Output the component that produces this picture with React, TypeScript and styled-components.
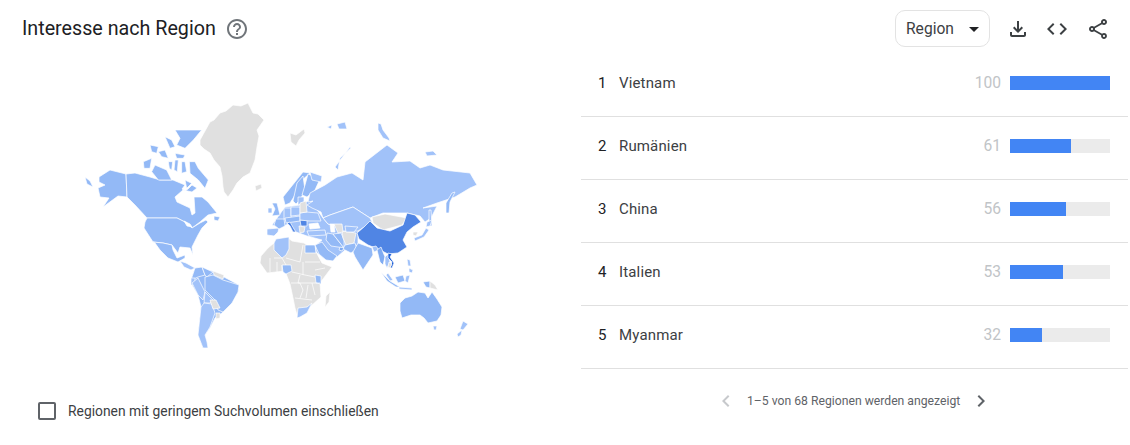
import React from "react";
import styled, { createGlobalStyle } from "styled-components";
import {
  MdHelpOutline,
  MdOutlineFileDownload,
  MdCode,
  MdOutlineShare,
  MdChevronLeft,
  MdChevronRight,
  MdArrowDropDown,
} from "react-icons/md";

const Global = createGlobalStyle`
  html, body { margin: 0; padding: 0; background: #fff; }
  body { font-family: Roboto, "Liberation Sans", sans-serif; color: #202124; overflow: hidden; }
`;

const Page = styled.div`
  width: 1130px;
  height: 445px;
  display: flex;
  flex-direction: column;
`;
const Header = styled.header`
  height: 54px;
  flex: none;
  display: flex;
  align-items: center;
  justify-content: space-between;
  padding: 3px 20px 0 22px;
  box-sizing: border-box;
`;
const TitleGroup = styled.div`
  display: flex;
  align-items: center;
  gap: 9px;
`;
const Title = styled.h2`
  margin: 0;
  font-size: 19.7px;
  font-weight: 400;
  color: #202124;
`;
const HelpIcon = styled(MdHelpOutline)`
  width: 24px;
  height: 24px;
  color: #70757a;
  display: block;
`;
const Actions = styled.div`
  display: flex;
  align-items: center;
`;
const Select = styled.div`
  width: 95px;
  height: 37px;
  box-sizing: border-box;
  border: 1px solid #e3e3e3;
  border-radius: 10px;
  display: flex;
  align-items: center;
  justify-content: space-between;
  padding: 0 3px 0 10px;
  font-size: 15.6px;
  color: #3c4043;
  margin-right: 16px;
`;
const CaretIcon = styled(MdArrowDropDown)`
  width: 24px;
  height: 24px;
  color: #202124;
`;
const IconButton = styled.button<{ $gap: number }>`
  width: 24px;
  height: 24px;
  margin-right: ${(p) => p.$gap}px;
  border: 0;
  padding: 0;
  background: none;
  color: #3c4043;
  display: flex;
  align-items: center;
  justify-content: center;
  svg { width: 24px; height: 24px; display: block; }
`;
const Body = styled.div`
  display: grid;
  grid-template-columns: 581px 549px;
  flex: 1;
`;
const LeftColumn = styled.div`
  display: flex;
  flex-direction: column;
`;
const MapSvg = styled.svg`
  display: block;
  width: 410px;
  height: 260px;
  margin: 46px 0 0 80px;
  filter: blur(0.35px);
`;
const CheckRow = styled.label`
  display: flex;
  align-items: center;
  gap: 12px;
  margin: 42px 0 0 38px;
  font-size: 13.87px;
  color: #3c4043;
`;
const CheckBox = styled.span`
  width: 18px;
  height: 18px;
  box-sizing: border-box;
  border: 2px solid #5f6368;
  border-radius: 2px;
  display: block;
`;
const RightColumn = styled.div`
  display: flex;
  flex-direction: column;
`;
const Row = styled.div`
  height: 63px;
  width: 547px;
  box-sizing: border-box;
  border-bottom: 1px solid #e0e0e0;
  display: flex;
  align-items: center;
  padding: 0 18px 5px 0;
  font-size: 15px;
  color: #3c4043;
`;
const Rank = styled.span`
  width: 38px;
  padding-left: 17px;
  box-sizing: border-box;
  flex: none;
  color: #202124;
`;
const Name = styled.span`
  flex: 1;
  letter-spacing: 0.15px;
`;
const Score = styled.span`
  color: #c1c4c7;
  font-size: 15.6px;
  width: 40px;
  text-align: right;
  margin-right: 9px;
`;
const Track = styled.div`
  width: 100px;
  height: 14px;
  background: #ebebeb;
`;
const Fill = styled.div`
  height: 100%;
  background: #4285f4;
`;
const Pager = styled.div`
  display: flex;
  align-items: center;
  margin: 20px 0 0 133px;
  font-size: 12.2px;
  color: #5f6368;
  gap: 9px;
`;
const PagerIcon = styled.span<{ $muted?: boolean }>`
  color: ${(p) => (p.$muted ? "#c7c9cc" : "#5f6368")};
  display: flex;
  svg { width: 24px; height: 24px; display: block; }
`;
const PagerText = styled.span`
  width: 213px;
  white-space: nowrap;
`;

const L = "#a1c2f9"; // light
const M = "#93b9f6"; // mid
const S = "#7fabf2";
const G = "#e0e0e0";
const C = "#5085e4";
const D = "#1c5fd8";
const W = "#ffffff";

// Arctic islands traced from a 3x crop whose origin is (130,130).
const arctic = (pts: string) =>
  pts
    .split(" ")
    .map((p) => {
      const [x, y] = p.split(",").map(Number);
      return `${130 + x / 3},${130 + y / 3}`;
    })
    .join(" ");

const regions: [string, string][] = [
  // Base land masses that close the gaps between countries
  [M, "195,268 213,271 224,277 239,285 238,292 230,305 222,313 215,318 210,328 205,335 208,348 203,348 198,335 201,307 198,295 192,285 191,279"],
  [L, "277,218 285,207 300,205 310,200 323,218 328,224 345,226 358,230 358,245 345,250 337,257 326,260 316,252 316,245 322,240 307,236 296,232 288,224 280,228 272,225"],
  // Greenland & grey north
  [G, "200,140 205,131 210,122 214,120 220,113 226,111 233,105 241,106 248,103 253,113 258,114 264,120 257,130 259,136 257,147 255,160 250,173 243,177 237,183 233,190 228,197 224,192 223,187 222,176 220,167 214,160 210,153 204,149 200,145"],
  [G, "255,186 261,184 262,188 256,191"],
  [G, "290,133 296,135 304,129 305,133 299,140 296,146 291,142"],
  // Alaska and Aleutians
  [M, "99,177 110,170 126,174 127,197 118,196 103,207 109,198 100,197 98,188 105,185 99,182"],
  [M, "85,177 90,181 93,187 87,184"],
  // Canada mainland
  [M, "126,174 135,173 150,177 160,180 173,180 185,185 182,189 185,191 188,189 192,185 197,188 192,192 183,190 175,197 177,202 190,208 192,215 195,213 194,197 202,197 208,202 217,213 208,215 200,222 192,228 187,223 177,218 147,218 135,205 127,197"],
  // Arctic archipelago
  [M, arctic("135,0 215,0 190,30 165,55 140,45 150,25")],
  [M, arctic("40,95 65,85 60,115 42,115")],
  [M, arctic("65,125 75,105 110,120 125,150 85,150")],
  [M, arctic("60,45 85,50 80,70 65,65")],
  [M, arctic("85,65 105,60 115,85 95,80")],
  [M, arctic("105,20 125,30 135,50 120,55")],
  [M, arctic("135,70 165,75 160,85 140,85")],
  [M, arctic("135,90 145,90 142,125 132,120")],
  [M, arctic("155,95 165,95 170,125 155,130")],
  [M, arctic("115,95 128,95 125,120 118,115")],
  [M, arctic("178,95 195,95 205,115 235,150 225,175 205,150 180,130")],
  [M, arctic("165,150 185,160 170,175")],
  [M, "214,216 220,217 218,221 214,220"],
  // USA
  [M, "147,218 177,218 187,223 192,228 200,223 206,220 208,222 202,228 198,235 192,247 193,255 190,248 180,247 178,253 172,245 163,243 153,242 144,228 145,222"],
  [W, "184,221 190,224 192,227 187,226"],
  // Mexico & Central America
  [M, "153,242 163,243 172,245 173,250 177,258 185,255 185,258 178,262 168,258 160,250 155,243"],
  [L, "180,261 186,263 195,268 191,270 184,267"],
  // South America
  [M, "195,268 202,267 205,275 198,277 191,280"],
  [M, "202,267 213,272 207,277 205,275"],
  [L, "191,278 195,278 195,285 191,285"],
  [L, "192,283 198,278 205,292 203,300 198,295"],
  [M, "205,277 213,275 223,280 239,285 238,292 232,303 223,312 218,310 215,300 205,290"],
  [L, "205,292 213,300 210,303 204,303"],
  [L, "204,303 212,304 215,313 210,327 205,335 207,342 208,348 203,348 198,335 201,307"],
  [G, "213,271 224,275 223,279 214,275"],
  [G, "210,300 216,300 220,308 213,309"],
  [G, "216,313 220,313 220,318 216,319"],
  // Africa
  [G, "260,263 261,256 268,248 274,243 287,237 292,241 304,243 315,250 322,263 332,267 326,275 320,283 321,297 311,306 305,312 298,318 295,308 293,298 290,284 285,271 276,272 267,273"],
  [L, "274,243 276,239 289,237 289,249 286,255 282,258 274,250"],
  [M, "305,245 315,245 316,253 305,253"],
  [M, "282,265 291,265 292,271 286,274 283,272"],
  [M, "315,275 321,276 321,284 316,283"],
  [L, "297,318 298,308 307,307 312,303 307,313 300,317"],
  [G, "326,296 330,292 329,302 325,307"],
  // Arabia / Middle east
  [M, "315,245 322,242 328,250 337,256 333,261 326,260 319,254"],
  [M, "327,233 333,234 344,248 338,247 331,246 326,240"],
  [M, "333,234 341,233 344,240 344,248"],
  [G, "342,231 356,233 354,243 346,245 343,238"],
  [M, "345,245 355,243 357,249 351,253 343,249"],
  [L, "307,231 325,230 326,235 309,236"],
  [S, "340,247 344,248 342,251 339,250"],
  // Europe
  [L, "267,229 279,228 278,232 274,236 267,235"],
  [M, "276,219 284,219 285,226 279,229 274,225"],
  [M, "272,203 277,203 280,215 272,216 275,209"],
  [L, "268,208 272,208 272,213 268,213"],
  [L, "284,208 291,208 291,218 284,219"],
  [L, "291,207 300,207 300,215 291,216"],
  [M, "285,218 300,216 300,221 286,223"],
  [C, "287,223 290,222 294,229 296,232 293,232 290,226"],
  [C, "300,220 307,220 307,226 301,226"],
  [L, "300,213 306,212 318,213 321,221 309,221 300,220"],
  [G, "299,226 305,227 304,232 300,233"],
  [M, "283,197 303,172 310,173 300,182 295,195 290,203 285,205"],
  [M, "297,183 303,176 305,190 300,200 296,204 293,201"],
  [M, "308,174 320,179 315,190 307,197 302,195 305,185"],
  [L, "310,172 322,176 321,182 312,180"],
  [L, "298,197 304,197 304,203 298,205"],
  [G, "300,203 306,201 307,212 300,213"],
  // Russia
  [L, "310,193 325,185 337,177 352,173 363,180 365,162 387,145 398,153 392,162 410,161 420,168 430,165 443,170 470,173 477,185 470,188 455,197 437,203 423,208 437,206 431,218 425,222 420,216 407,213 383,213 370,218 353,207 330,215 323,218 321,212 312,208 307,205 313,201 308,202"],
  [L, "335,167 350,147 351,148 340,158 338,170"],
  [L, "378,123 381,124 383,130 389,138 390,141 383,138 378,130"],
  [L, "327,127 332,125 331,129"],
  [L, "337,124 345,122 347,129 339,129"],
  [L, "425,152 433,151 437,155 427,156"],
  [M, "446,213 446,203 452,193 455,192 450,202 449,213"],
  [L, "429,210 431,210 432,226 429,226"],
  // Central Asia
  [L, "323,218 330,215 353,207 370,218 372,222 358,231 342,231 337,226 328,224"],
  [G, "334,224 342,224 343,232 338,233"],
  [L, "345,226 358,227 354,232 346,232"],
  // Mongolia
  [G, "372,217 385,214 407,218 402,225 383,230 373,223"],
  // China
  [C, "357,233 364,227 370,221 377,228 390,231 403,225 407,213 415,215 421,222 413,227 407,232 403,240 407,247 398,253 388,254 378,249 368,245 359,239"],
  [G, "413,232 418,232 416,236 413,235"],
  // India region
  [M, "353,252 358,243 372,248 373,255 363,270 355,257"],
  [L, "372,247 376,246 379,250 374,252"],
  [S, "377,250 381,247 385,257 383,265 380,262"],
  [L, "385,257 388,254 390,262 387,268 385,264"],
  [D, "388,253 392,254 390,257 394,263 392,268 390,268 392,262 388,258"],
  [G, "389,262 392,264 390,268 388,267"],
  [L, "388,273 393,280 390,281 386,275"],
  // SE Asia
  [M, "381,272 390,281 400,287 396,287 387,281"],
  [M, "395,277 403,275 405,281 398,283"],
  [L, "399,287 412,288 412,290 399,289"],
  [L, "407,259 410,260 411,266 408,266"],
  [L, "409,268 413,270 412,273 409,272"],
  [L, "406,276 410,275 408,283 405,281"],
  [M, "423,282 430,281 430,288 426,287"],
  [G, "430,281 435,285 438,290 430,288"],
  // Japan
  [L, "432,220 430,226 426,227 427,222"],
  [L, "426,228 429,230 424,237 415,241 414,238 422,235"],
  // Australia
  [M, "400,303 405,298 412,296 418,292 425,293 428,298 432,292 437,299 442,307 441,315 437,321 428,323 424,318 420,315 411,315 402,318 400,311"],
  [L, "433,326 437,326 436,330 434,330"],
  [L, "463,321 468,324 463,330 460,329"],
  [L, "457,334 462,330 461,335 458,337"],
  // Inland seas
  [W, "309,224 318,223 320,228 310,229"],
  [W, "330,224 334,224 335,232 331,232"],
];

const borders = [
  "274,258 282,258 286,265",
  "270,258 270,272",
  "286,258 300,262 303,245",
  "303,262 303,275",
  "292,272 305,275 315,277",
  "305,262 320,262",
  "298,283 320,283",
  "291,283 300,283 303,290 300,298",
  "295,298 312,300",
  "308,285 306,298",
  "312,283 315,295",
  "315,270 325,268",
  "277,262 277,272",
  "282,265 282,272",
  "300,275 298,283",
];

const rows = [
  { rank: 1, name: "Vietnam", value: 100 },
  { rank: 2, name: "Rumänien", value: 61 },
  { rank: 3, name: "China", value: 56 },
  { rank: 4, name: "Italien", value: 53 },
  { rank: 5, name: "Myanmar", value: 32 },
];

export default function App() {
  return (
    <Page>
      <Global />
      <Header>
        <TitleGroup>
          <Title>Interesse nach Region</Title>
          <HelpIcon />
        </TitleGroup>
        <Actions>
          <Select>
            Region
            <CaretIcon />
          </Select>
          <IconButton $gap={15}><MdOutlineFileDownload /></IconButton>
          <IconButton $gap={17}><MdCode /></IconButton>
          <IconButton $gap={0}><MdOutlineShare /></IconButton>
        </Actions>
      </Header>
      <Body>
        <LeftColumn>
          <MapSvg viewBox="80 100 410 260" aria-label="Weltkarte">
            {regions.map(([fill, points], i) => (
              <polygon key={i} points={points} fill={fill} stroke="#fff" strokeWidth={0.7} strokeLinejoin="round" />
            ))}
            {borders.map((points, i) => (
              <polyline key={i} points={points} fill="none" stroke="#fff" strokeWidth={0.7} />
            ))}
          </MapSvg>
          <CheckRow>
            <CheckBox />
            Regionen mit geringem Suchvolumen einschließen
          </CheckRow>
        </LeftColumn>
        <RightColumn>
          {rows.map((r) => (
            <Row key={r.rank}>
              <Rank>{r.rank}</Rank>
              <Name>{r.name}</Name>
              <Score>{r.value}</Score>
              <Track>
                <Fill style={{ width: `${r.value}%` }} />
              </Track>
            </Row>
          ))}
          <Pager>
            <PagerIcon $muted><MdChevronLeft /></PagerIcon>
            <PagerText>1–5 von 68 Regionen werden angezeigt</PagerText>
            <PagerIcon><MdChevronRight /></PagerIcon>
          </Pager>
        </RightColumn>
      </Body>
    </Page>
  );
}
